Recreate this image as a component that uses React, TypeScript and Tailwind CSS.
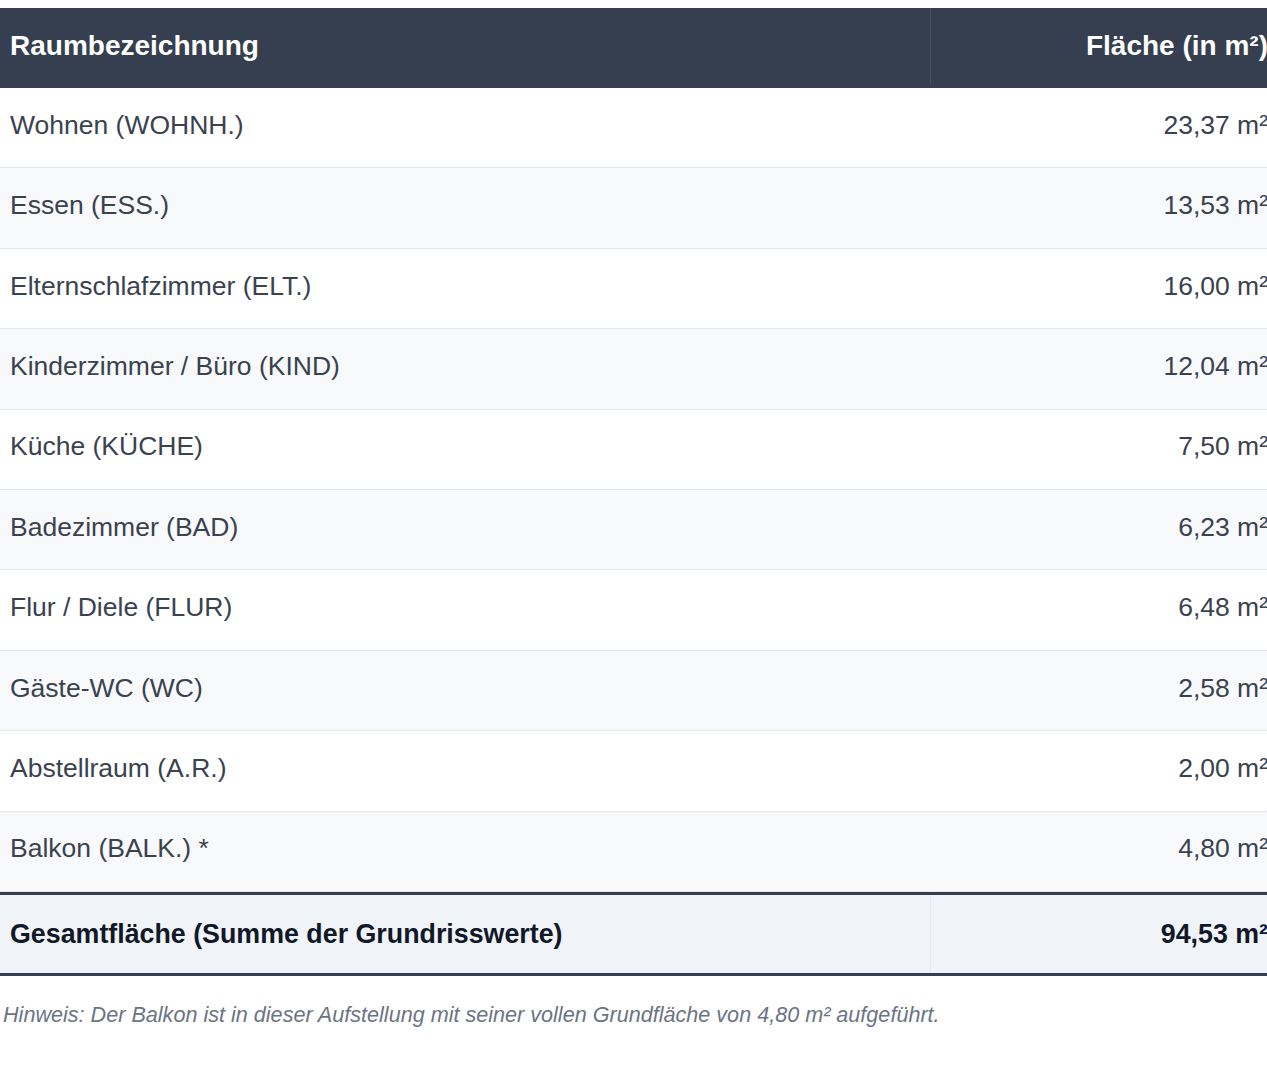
const rows = [
  ["Wohnen (WOHNH.)", "23,37 m²"],
  ["Essen (ESS.)", "13,53 m²"],
  ["Elternschlafzimmer (ELT.)", "16,00 m²"],
  ["Kinderzimmer / Büro (KIND)", "12,04 m²"],
  ["Küche (KÜCHE)", "7,50 m²"],
  ["Badezimmer (BAD)", "6,23 m²"],
  ["Flur / Diele (FLUR)", "6,48 m²"],
  ["Gäste-WC (WC)", "2,58 m²"],
  ["Abstellraum (A.R.)", "2,00 m²"],
  ["Balkon (BALK.) *", "4,80 m²"],
];

export default function App() {
  return (
    <div className="w-[1267px] overflow-hidden bg-white pt-2 font-['Liberation_Sans',Arial,sans-serif]">
      <div className="w-[1279px]">
        {/* header */}
        <div className="flex h-[80px] bg-[#353f50] pb-[4px] text-[28px] font-bold text-white">
          <div className="flex w-[931px] items-center border-r border-[#46505f] pl-[10px]">
            Raumbezeichnung
          </div>
          <div className="flex flex-1 items-center justify-end pr-[11px]">Fläche (in m²)</div>
        </div>

        {rows.map(([name, area], i) => (
          <div
            key={name}
            className={`flex h-[80.4px] border-b border-[#e4e7ec] pb-[4px] text-[26.5px] text-[#3a4250] ${
              i % 2 === 1 ? "bg-[#f8f9fb]" : "bg-white"
            }`}
          >
            <div className="flex w-[931px] items-center pl-[10px]">{name}</div>
            <div className="flex flex-1 items-center justify-end pr-[11px]">{area}</div>
          </div>
        ))}

        {/* total */}
        <div className="flex h-[84px] border-y-[3px] border-[#353f50] bg-[#f0f3f8] text-[26.8px] font-bold text-[#111827]">
          <div className="flex w-[931px] items-center border-r border-[#e6eaf0] pl-[10px]">
            Gesamtfläche (Summe der Grundrisswerte)
          </div>
          <div className="flex flex-1 items-center justify-end pr-[11px]">94,53 m²</div>
        </div>
      </div>

      <p className="mt-[23px] pl-[3px] text-[21.6px] italic text-[#6b7484]">
        Hinweis: Der Balkon ist in dieser Aufstellung mit seiner vollen Grundfläche von 4,80 m² aufgeführt.
      </p>
      <div className="h-[40px]" />
    </div>
  );
}
